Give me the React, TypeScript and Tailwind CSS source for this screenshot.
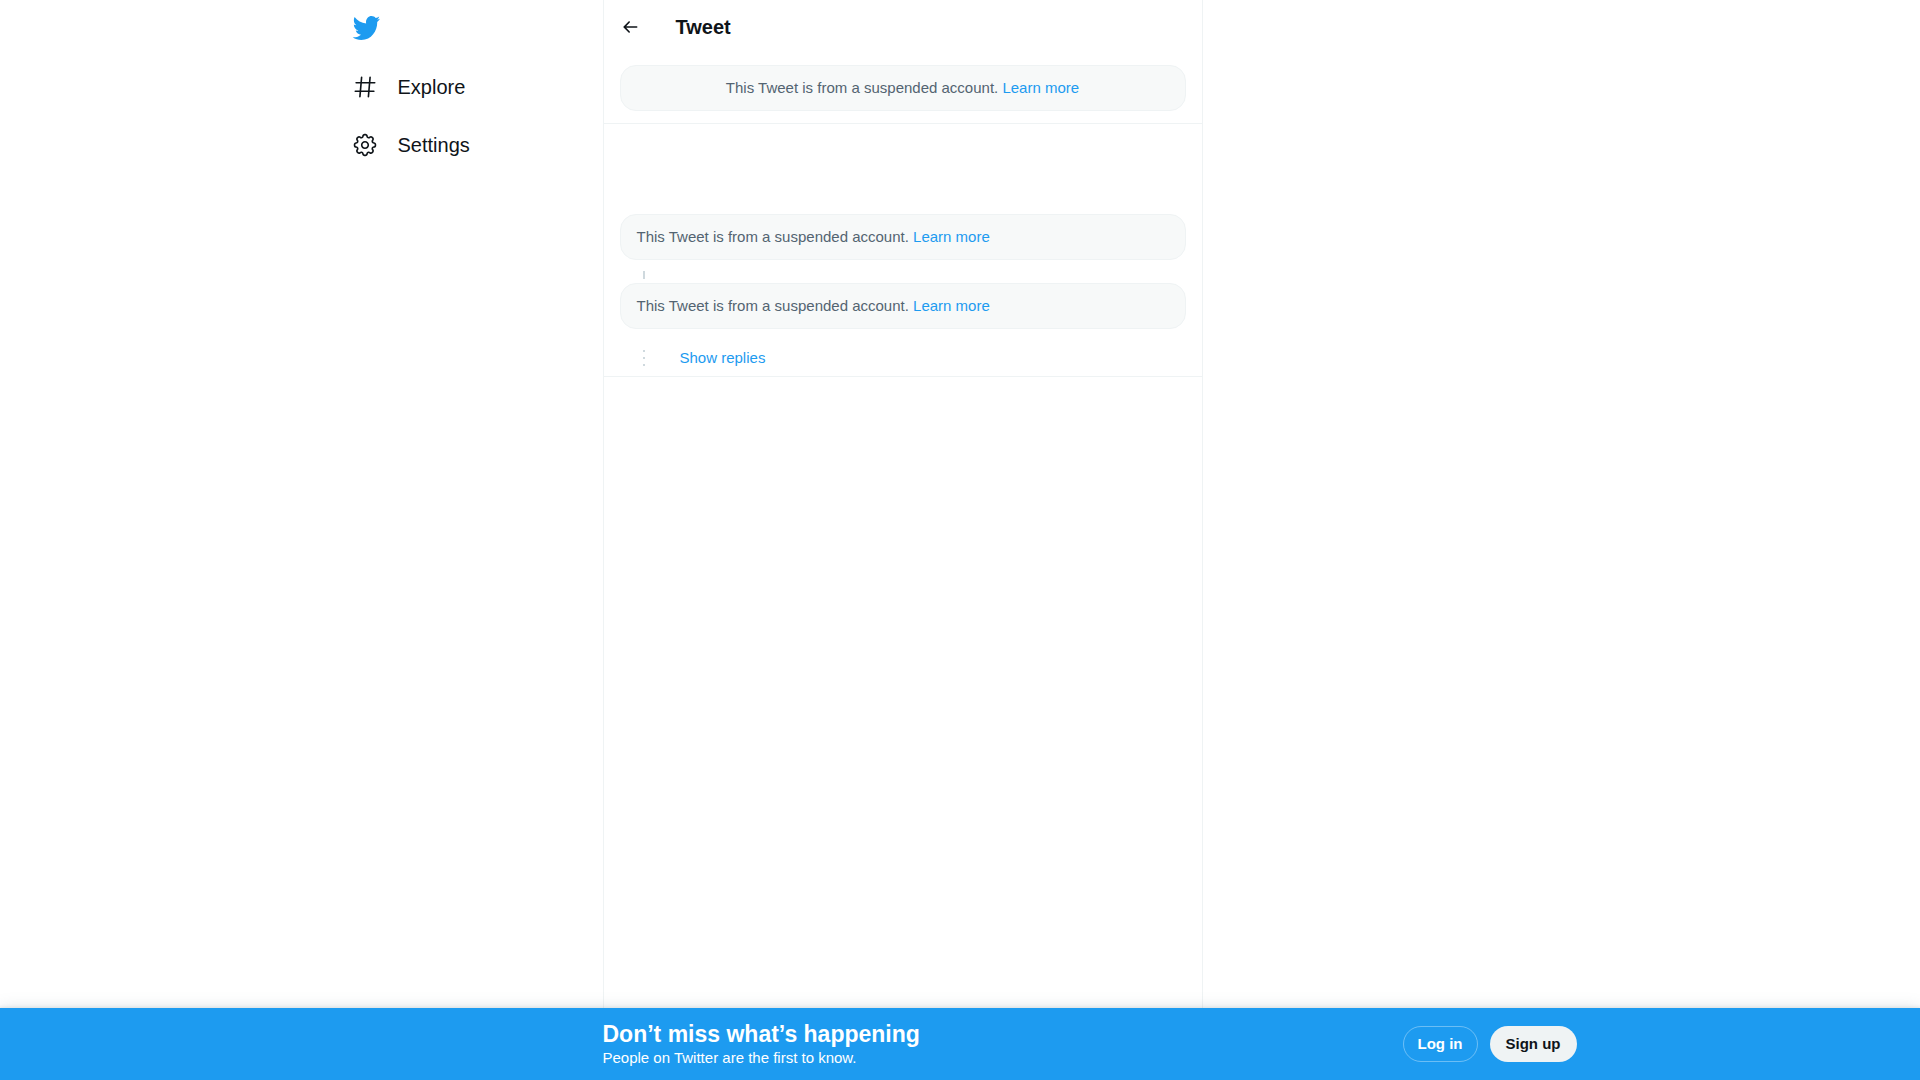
import type { ReactNode } from "react";

interface IconProps {
  className: string;
  children: ReactNode;
}

function Icon({ className, children }: IconProps) {
  return (
    <svg viewBox="0 0 24 24" fill="currentColor" aria-hidden="true" className={className}>
      {children}
    </svg>
  );
}

function TwitterLogo() {
  return (
    <svg
      viewBox="0.35 2.75 23.3 18.46"
      preserveAspectRatio="none"
      fill="currentColor"
      aria-hidden="true"
      className="h-6 w-7 text-[#1d9bf0]"
    >
      <path d="M23.643 4.937c-.835.37-1.732.62-2.675.733.962-.576 1.7-1.49 2.048-2.578-.9.534-1.897.922-2.958 1.13-.85-.904-2.06-1.47-3.4-1.47-2.572 0-4.658 2.086-4.658 4.66 0 .364.042.718.12 1.06-3.873-.195-7.304-2.05-9.602-4.868-.4.69-.63 1.49-.63 2.342 0 1.616.823 3.043 2.072 3.878-.764-.025-1.482-.234-2.11-.583v.06c0 2.257 1.605 4.14 3.737 4.568-.392.106-.803.162-1.227.162-.3 0-.593-.028-.877-.082.593 1.85 2.313 3.198 4.352 3.234-1.595 1.25-3.604 1.995-5.786 1.995-.376 0-.747-.022-1.112-.065 2.062 1.323 4.51 2.093 7.14 2.093 8.57 0 13.255-7.098 13.255-13.254 0-.2-.005-.402-.014-.602.91-.658 1.7-1.477 2.323-2.41z" />
    </svg>
  );
}

function ExploreIcon() {
  return (
    <Icon className="size-[26px]">
      <path d="M21 7.337h-3.93l.372-4.272c.036-.412-.27-.775-.682-.812-.417-.03-.776.27-.812.683l-.383 4.4h-6.32l.37-4.27c.037-.413-.27-.776-.68-.813-.42-.03-.777.27-.813.683l-.382 4.4H3.782c-.414 0-.75.337-.75.75s.336.75.75.75H7.61l-.55 6.327H3c-.414 0-.75.336-.75.75s.336.75.75.75h3.93l-.372 4.272c-.036.412.27.775.682.812l.066.003c.385 0 .712-.295.746-.686l.383-4.4h6.32l-.37 4.27c-.036.413.27.776.682.813l.066.003c.385 0 .712-.295.746-.686l.382-4.4h3.957c.413 0 .75-.337.75-.75s-.337-.75-.75-.75H16.39l.55-6.327H21c.414 0 .75-.336.75-.75s-.336-.75-.75-.75zm-6.115 7.826h-6.32l.55-6.326h6.32l-.55 6.326z" />
    </Icon>
  );
}

function SettingsIcon() {
  return (
    <Icon className="size-[26px]">
      <path d="M12 8.21c-2.09 0-3.79 1.7-3.79 3.79s1.7 3.79 3.79 3.79 3.79-1.7 3.79-3.79-1.7-3.79-3.79-3.79zm0 6.08c-1.262 0-2.29-1.026-2.29-2.29S10.74 9.71 12 9.71s2.29 1.026 2.29 2.29-1.028 2.29-2.29 2.29z" />
      <path d="M12.36 22.375h-.722c-1.183 0-2.154-.888-2.262-2.064l-.014-.147c-.025-.287-.207-.533-.472-.644-.286-.12-.582-.065-.798.115l-.116.097c-.868.725-2.253.663-3.06-.14l-.51-.51c-.836-.84-.896-2.154-.14-3.06l.098-.118c.186-.222.23-.523.122-.787-.11-.272-.358-.454-.646-.48l-.15-.014c-1.18-.107-2.067-1.08-2.067-2.262v-.722c0-1.183.888-2.154 2.064-2.262l.156-.014c.285-.025.53-.207.642-.473.11-.27.065-.573-.12-.795l-.094-.116c-.757-.908-.698-2.223.137-3.06l.512-.512c.804-.804 2.188-.865 3.06-.14l.116.098c.218.184.528.23.79.122.27-.112.452-.358.477-.643l.014-.153c.107-1.18 1.08-2.066 2.262-2.066h.722c1.183 0 2.154.888 2.262 2.064l.014.156c.025.285.206.53.472.64.277.117.58.062.794-.117l.12-.102c.867-.723 2.254-.662 3.06.14l.51.512c.836.838.896 2.153.14 3.06l-.1.118c-.188.22-.234.522-.123.788.112.27.36.45.646.478l.152.014c1.18.107 2.067 1.08 2.067 2.262v.723c0 1.183-.888 2.154-2.064 2.262l-.155.014c-.284.024-.53.205-.64.47-.113.272-.067.574.117.795l.1.12c.756.905.696 2.22-.14 3.06l-.51.51c-.807.804-2.19.864-3.06.14l-.115-.096c-.217-.183-.53-.23-.79-.122-.273.114-.455.36-.48.646l-.014.15c-.107 1.173-1.08 2.06-2.262 2.06zm-3.773-4.42c.3 0 .593.06.87.175.79.328 1.324 1.054 1.4 1.896l.014.147c.037.4.367.7.77.7h.722c.4 0 .73-.3.768-.7l.014-.148c.076-.842.61-1.567 1.392-1.892.793-.33 1.696-.182 2.333.35l.113.094c.178.148.366.18.493.18.206 0 .4-.08.546-.227l.51-.51c.284-.284.305-.73.048-1.038l-.1-.12c-.542-.65-.677-1.54-.352-2.323.326-.79 1.052-1.32 1.894-1.397l.155-.014c.397-.037.7-.367.7-.77v-.722c0-.4-.303-.73-.702-.768l-.152-.014c-.846-.078-1.57-.61-1.895-1.393-.326-.788-.19-1.678.353-2.327l.1-.118c.257-.31.236-.756-.048-1.04l-.51-.51c-.146-.147-.34-.227-.546-.227-.127 0-.315.032-.492.18l-.12.1c-.634.528-1.55.67-2.322.354-.788-.327-1.32-1.052-1.397-1.896l-.014-.155c-.035-.397-.365-.7-.767-.7h-.723c-.4 0-.73.303-.768.702l-.014.152c-.076.843-.608 1.568-1.39 1.893-.787.326-1.693.183-2.33-.35l-.118-.096c-.18-.15-.368-.18-.495-.18-.206 0-.4.08-.546.226l-.512.51c-.282.284-.303.73-.046 1.038l.1.118c.54.653.677 1.544.352 2.325-.327.788-1.052 1.32-1.895 1.397l-.156.014c-.397.037-.7.367-.7.77v.722c0 .4.303.73.702.768l.15.014c.848.078 1.573.612 1.897 1.396.325.786.19 1.675-.353 2.325l-.096.115c-.26.31-.238.756.046 1.04l.51.51c.146.147.34.227.546.227.127 0 .315-.03.492-.18l.116-.096c.406-.336.923-.524 1.453-.524z" />
    </Icon>
  );
}

function BackIcon() {
  return (
    <Icon className="size-5">
      <path d="M20 11H7.414l4.293-4.293c.39-.39.39-1.023 0-1.414s-1.023-.39-1.414 0l-6 6c-.39.39-.39 1.023 0 1.414l6 6c.195.195.45.293.707.293s.512-.098.707-.293c.39-.39.39-1.023 0-1.414L7.414 13H20c.553 0 1-.447 1-1s-.447-1-1-1z" />
    </Icon>
  );
}

const navItems = [
  { label: "Explore", icon: <ExploreIcon /> },
  { label: "Settings", icon: <SettingsIcon /> },
];

function Sidebar() {
  return (
    <header className="w-[275px] shrink-0 px-3">
      <a href="#" aria-label="Twitter" className="flex w-fit px-3 py-4">
        <TwitterLogo />
      </a>
      <nav className="mt-0.5 flex flex-col items-start">
        {navItems.map((item) => (
          <a key={item.label} href="#" className="flex items-center gap-5 p-4 pl-3 text-xl leading-[26px]">
            {item.icon}
            <span>{item.label}</span>
          </a>
        ))}
      </nav>
    </header>
  );
}

function SuspendedNotice({ centered = false }: { centered?: boolean }) {
  return (
    <div
      className={`rounded-2xl border border-[#eff3f4] bg-[#f7f9f9] px-4 py-3 text-[15px] leading-5 text-[#536471] ${
        centered ? "text-center" : ""
      }`}
    >
      This Tweet is from a suspended account.{" "}
      <a href="#" className="text-[#1d9bf0] hover:underline">
        Learn more
      </a>
    </div>
  );
}

function LoginBar() {
  return (
    <div className="sticky bottom-0 bg-[#1d9bf0] shadow-[0_0_15px_rgba(101,119,134,0.2),0_0_3px_1px_rgba(101,119,134,0.15)]">
      <div className="mx-auto flex max-w-[1265px]">
        <div className="w-[275px] shrink-0" />
        <div className="flex h-[72px] grow items-center justify-between pr-4">
          <div className="text-white">
            <h2 className="text-[23px] leading-7 font-bold">Don’t miss what’s happening</h2>
            <p className="text-[15px] leading-5">People on Twitter are the first to know.</p>
          </div>
          <div className="flex gap-3 text-[15px] font-bold">
            <button type="button" className="h-9 rounded-full border border-white/35 px-3.5 text-white">
              Log in
            </button>
            <button type="button" className="h-9 rounded-full bg-[#eff3f4] px-4 text-[#0f1419]">
              Sign up
            </button>
          </div>
        </div>
      </div>
    </div>
  );
}

export default function App() {
  return (
    <div className="flex min-h-screen flex-col bg-white font-['Liberation_Sans',Arial,sans-serif] text-[#0f1419]">
      <div className="mx-auto flex w-full max-w-[1265px] grow">
        <Sidebar />
        <main className="w-full max-w-[600px] border-x border-[#eff3f4]">
          <div className="flex h-[53px] items-center gap-9 px-4">
            <button type="button" aria-label="Back">
              <BackIcon />
            </button>
            <h1 className="text-xl leading-6 font-bold">Tweet</h1>
          </div>

          <div className="border-b border-[#eff3f4] px-4 py-3">
            <SuspendedNotice centered />
          </div>

          <section className="mt-20 border-b border-[#eff3f4] px-4 pt-2.5">
            <SuspendedNotice />
            {/* thread line between the two replies */}
            <div className="mt-[11px] mb-1 ml-[23px] h-2 w-0.5 bg-[#cfd9de]" />
            <SuspendedNotice />
            <div className="flex items-center gap-[35px] pt-[19px] pb-2">
              <div className="ml-[23px] flex flex-col gap-[5px]">
                <span className="size-0.5 bg-[#cfd9de]" />
                <span className="size-0.5 bg-[#cfd9de]" />
                <span className="size-0.5 bg-[#cfd9de]" />
              </div>
              <button type="button" className="text-[15px] leading-5 text-[#1d9bf0]">
                Show replies
              </button>
            </div>
          </section>
        </main>
      </div>
      <LoginBar />
    </div>
  );
}
